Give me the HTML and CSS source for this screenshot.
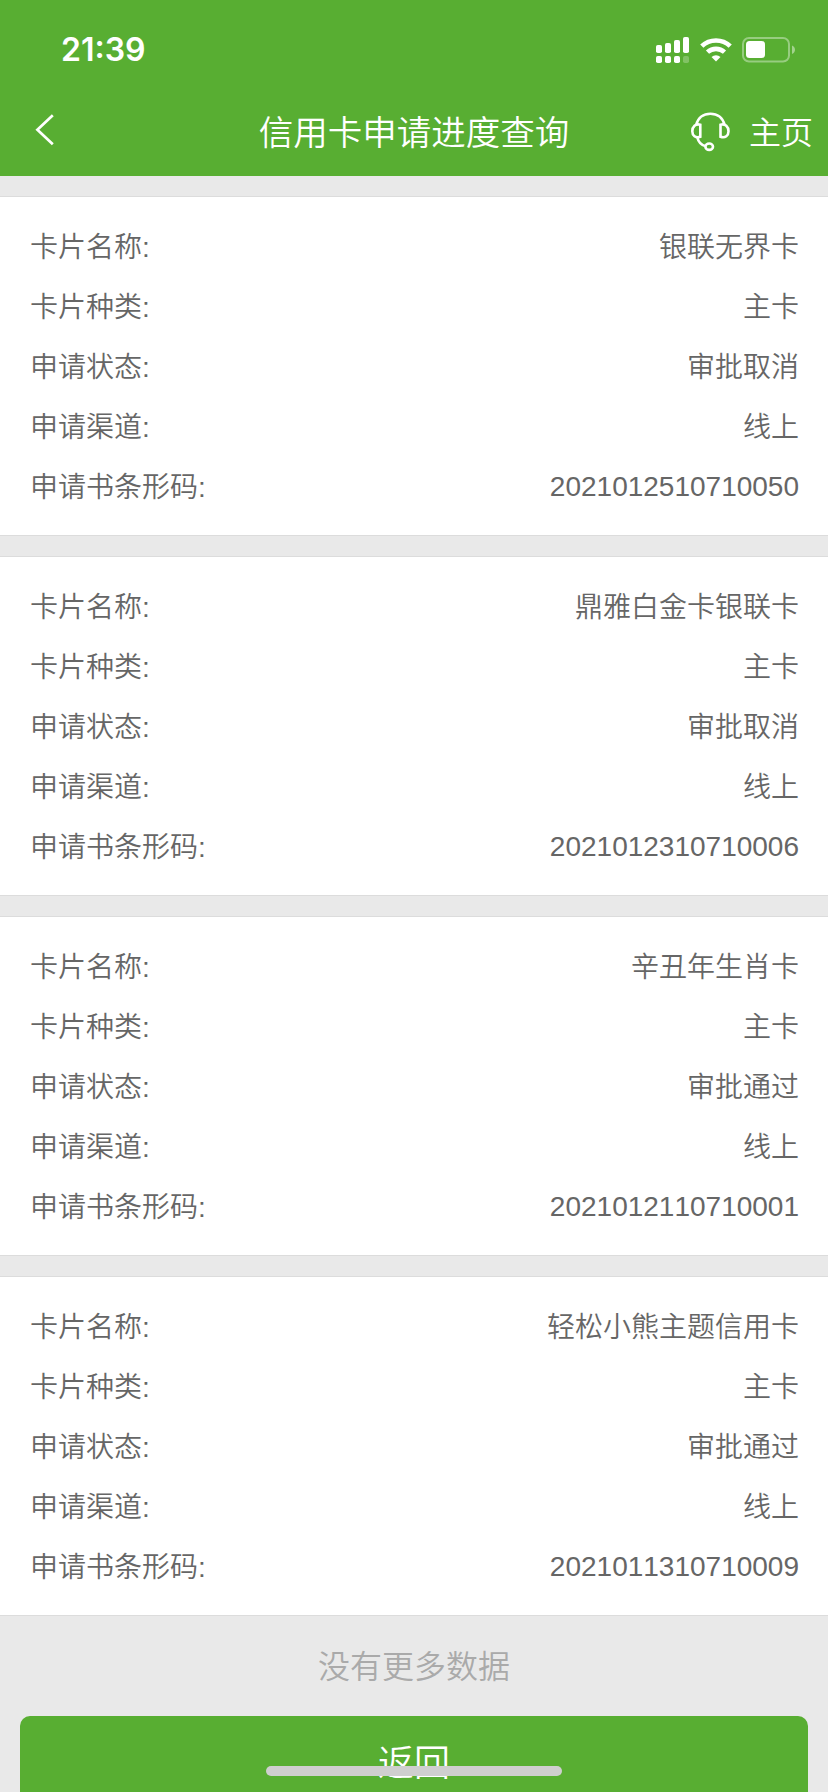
FILE: index.html
```
<!DOCTYPE html>
<html lang="zh-CN">
<head>
    <meta charset="UTF-8">
    <meta name="viewport" content="width=device-width, initial-scale=1.0">
    <title>信用卡申请进度查询</title>
    <link rel="stylesheet" href="styles.css">
</head>
<body>
    <header>
        <div class="status-bar">
            <span class="time">21:39</span>
            <div class="status-icons">
                <svg class="signal" width="34" height="26" viewBox="0 0 34 26" fill="#fff">
                    <rect x="0" y="8" width="6" height="8" rx="1.8"/>
                    <rect x="9" y="6" width="6" height="10" rx="1.8"/>
                    <rect x="18" y="3" width="6" height="13" rx="1.8"/>
                    <rect x="27" y="0" width="6" height="16" rx="1.8"/>
                    <rect x="0" y="19" width="6" height="7" rx="1.8"/>
                    <rect x="9" y="19" width="6" height="7" rx="1.8"/>
                    <rect x="18" y="19" width="6" height="7" rx="1.8"/>
                    <rect x="27" y="19" width="6" height="7" rx="1.8" opacity="0.25"/>
                </svg>
                <svg class="wifi" width="32" height="26" viewBox="0 0 32 26" fill="none" stroke="#fff" stroke-width="4.6">
                    <path d="M1.8 9.2a20.4 20.4 0 0 1 28.4 0"/>
                    <path d="M7.5 15.2a12.4 12.4 0 0 1 17 0"/>
                    <path d="M11.5 20a6.6 6.6 0 0 1 9 0L16 24.4z" fill="#fff" stroke="none"/>
                </svg>
                <svg class="battery" width="54" height="26" viewBox="0 0 54 26">
                    <rect x="1" y="1" width="46" height="23.5" rx="6" fill="none" stroke="#fff" stroke-width="2" opacity="0.38"/>
                    <rect x="4" y="4" width="19" height="17" rx="3.5" fill="#fff"/>
                    <path d="M50 8.5c4 1.6 4 7 0 8.6z" fill="#fff" opacity="0.45"/>
                </svg>
            </div>
        </div>
        <div class="nav-bar">
            <svg class="back" width="20" height="32" viewBox="0 0 20 32" fill="none" stroke="#fff" stroke-width="2.7">
                <path d="M17.8 1.2L2.4 15.8l15.4 14.4"/>
            </svg>
            <h1>信用卡申请进度查询</h1>
            <div class="nav-right">
                <svg class="headset" width="40" height="40" viewBox="0 0 40 40" fill="none" stroke="#fff" stroke-width="2.6">
                    <path d="M5.2 13C7 5.7 12.500 1.700 19.400 1.700S31.800 5.700 33.600 13"/>
                    <path d="M9.300 12.800v12C4.500 26.500 1.300 23.500 1.300 19.200S4.500 11.200 9.300 12.800z"/>
                    <path d="M29.500 12.800v12C34.300 26.500 37.500 23.500 37.500 19.200S34.300 11.200 29.500 12.800z"/>
                    <path d="M6.300 25.500c1 4 4 7.700 8.400 8.800"/>
                    <ellipse cx="18.200" cy="34.700" rx="3.800" ry="3.200"/>
                </svg>
                <span>主页</span>
            </div>
        </div>
    </header>

    <div class="list">
        <div class="card">
            <div class="row"><span>卡片名称:</span><span>银联无界卡</span></div>
            <div class="row"><span>卡片种类:</span><span>主卡</span></div>
            <div class="row"><span>申请状态:</span><span>审批取消</span></div>
            <div class="row"><span>申请渠道:</span><span>线上</span></div>
            <div class="row"><span>申请书条形码:</span><span class="code">2021012510710050</span></div>
        </div>
        <div class="card">
            <div class="row"><span>卡片名称:</span><span>鼎雅白金卡银联卡</span></div>
            <div class="row"><span>卡片种类:</span><span>主卡</span></div>
            <div class="row"><span>申请状态:</span><span>审批取消</span></div>
            <div class="row"><span>申请渠道:</span><span>线上</span></div>
            <div class="row"><span>申请书条形码:</span><span class="code">2021012310710006</span></div>
        </div>
        <div class="card">
            <div class="row"><span>卡片名称:</span><span>辛丑年生肖卡</span></div>
            <div class="row"><span>卡片种类:</span><span>主卡</span></div>
            <div class="row"><span>申请状态:</span><span>审批通过</span></div>
            <div class="row"><span>申请渠道:</span><span>线上</span></div>
            <div class="row"><span>申请书条形码:</span><span class="code">2021012110710001</span></div>
        </div>
        <div class="card">
            <div class="row"><span>卡片名称:</span><span>轻松小熊主题信用卡</span></div>
            <div class="row"><span>卡片种类:</span><span>主卡</span></div>
            <div class="row"><span>申请状态:</span><span>审批通过</span></div>
            <div class="row"><span>申请渠道:</span><span>线上</span></div>
            <div class="row"><span>申请书条形码:</span><span class="code">2021011310710009</span></div>
        </div>
    </div>

    <p class="no-more">没有更多数据</p>
    <button class="return-btn">返回</button>
    <div class="home-indicator"></div>
</body>
</html>
```
FILE: styles.css
```
* {
    box-sizing: border-box;
}
body {
    position: relative;
    height: 1792px;
    margin: 0;
    overflow: hidden;
    background-color: #e9e9e9;
    color: #666;
    font-family: "Liberation Sans", "Noto Sans CJK SC", sans-serif;
    font-weight: 350;
    font-kerning: none;
}
header {
    height: 176px;
    background-color: #58ae32;
    color: #fff;
}
.status-bar {
    display: flex;
    justify-content: space-between;
    height: 88px;
    padding: 30px 32px 0 61px;
}
.time {
    font-family: Inter, sans-serif;
    font-size: 32px;
    font-weight: 600;
    line-height: 40px;
}
.status-icons {
    display: flex;
    padding-top: 7px;
}
.wifi {
    margin-left: 10px;
}
.battery {
    margin-left: 10px;
}
/* equal side columns keep the title centred */
.nav-bar {
    display: grid;
    grid-template-columns: 1fr auto 1fr;
    align-items: center;
    height: 88px;
    padding: 0 15px 0 35px;
}
.nav-bar h1 {
    margin: 1px 0 0 -20px;
    font-size: 34.5px;
    font-weight: 350;
    line-height: 50px;
}
.back {
    margin-top: -4px;
}
.nav-right {
    display: flex;
    align-items: center;
    justify-content: flex-end;
    gap: 18px;
    font-size: 32px;
    line-height: 50px;
}
.nav-right span {
    padding-top: 1px;
}
.list {
    padding-top: 20px;
}
.card {
    margin-bottom: 20px;
    padding: 21px 29px 17px 30px;
    background-color: #fff;
    border-top: 1px solid #dcdcdc;
    border-bottom: 1px solid #dcdcdc;
}
.card:last-child {
    margin-bottom: 0;
}
.row {
    display: flex;
    justify-content: space-between;
    height: 60px;
    font-size: 28px;
    line-height: 60px;
}
.code {
    line-height: 58px;
}
.no-more {
    margin: 0;
    height: 100px;
    padding-top: 2px;
    color: #aaa;
    font-size: 32px;
    line-height: 98px;
    text-align: center;
}
.return-btn {
    display: block;
    width: 788px;
    height: 94px;
    margin: 0 auto;
    padding: 2px 0 0;
    border: none;
    border-radius: 10px;
    background-color: #58ae32;
    color: #fff;
    font-family: inherit;
    font-size: 36px;
    font-weight: 350;
    line-height: 92px;
}
.home-indicator {
    position: absolute;
    left: 266px;
    bottom: 16px;
    width: 296px;
    height: 10px;
    border-radius: 5px;
    background-color: #cfcfcf;
}
```
